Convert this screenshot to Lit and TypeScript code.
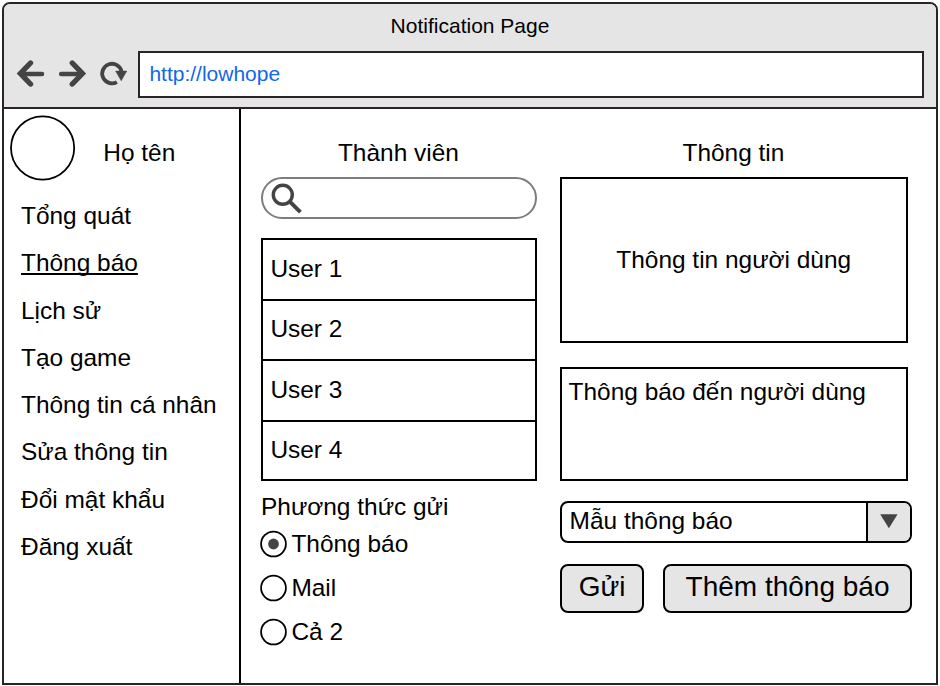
import { LitElement, html, css, svg } from "lit";
import { customElement, state } from "lit/decorators.js";
import { classMap } from "lit/directives/class-map.js";

@customElement("app-root")
export class AppRoot extends LitElement {
  static styles = css`
    :host {
      display: block;
      width: 940px;
      height: 686px;
      overflow: hidden;
      background: #fff;
      color: #000;
      font: 24.45px "Liberation Sans", Arial, sans-serif;
    }
    * {
      box-sizing: border-box;
    }
    svg {
      display: block;
      flex: none;
    }
    .window {
      display: flex;
      flex-direction: column;
      width: 936px;
      height: 683px;
      margin: 2px 0 0 2px;
      border: 2px solid #282427;
      border-radius: 8px 8px 0 0;
      overflow: hidden;
    }
    .chrome {
      height: 105px;
      flex: none;
      background: #e5e5e5;
      border-bottom: 2px solid #282427;
    }
    .caption {
      height: 47px;
      line-height: 44px;
      text-align: center;
      font-size: 21px;
    }
    .toolbar {
      display: flex;
      height: 47px;
      padding: 0 12px 0 12px;
    }
    .tools {
      width: 122px;
    }
    .address {
      flex: 1;
      border: 2px solid #282427;
      background: #fff;
      padding-left: 9.4px;
      line-height: 42px;
      font-size: 21px;
      color: #1267e8;
    }
    .body {
      flex: 1;
      display: flex;
      min-height: 0;
    }
    .sidebar {
      width: 237px;
      border-right: 2px solid #000;
      flex: none;
    }
    .profile {
      display: flex;
      height: 83px;
      padding: 6px 0 0 6px;
      gap: 27.3px;
    }
    .name {
      line-height: 75px;
    }
    nav {
      display: flex;
      flex-direction: column;
      align-items: flex-start;
      padding-left: 17px;
    }
    .link {
      height: 47.3px;
      line-height: 47.3px;
      white-space: nowrap;
    }
    .link.active {
      text-decoration: underline;
      text-decoration-thickness: 2px;
      text-underline-offset: 2px;
      text-decoration-skip-ink: none;
    }
    .main {
      display: flex;
      padding: 28px 0 0 20px;
      gap: 23px;
    }
    .members {
      width: 276px;
    }
    .info {
      width: 352px;
    }
    .heading {
      height: 40px;
      line-height: 32px;
      text-align: center;
      padding-right: 1.2px;
    }
    .info .heading {
      width: 348px;
    }
    .search {
      height: 42px;
      border: 2px solid #7d7d7d;
      border-radius: 21px;
      padding: 2px 0 0 8px;
    }
    .list {
      display: grid;
      grid-template-rows: 61px 60px 61px 57px;
      margin-top: 19px;
      border: 2px solid #000;
    }
    .row {
      padding-left: 7.4px;
      line-height: 56px;
      border-bottom: 2px solid #000;
    }
    .row:nth-child(odd) {
      line-height: 58px;
    }
    .row:last-child {
      border-bottom: 0;
    }
    .label {
      margin-top: 12px;
      height: 29px;
      line-height: 28px;
    }
    .radio {
      display: flex;
      align-items: center;
      height: 44px;
      line-height: 40px;
      gap: 4.4px;
    }
    .radio svg {
      overflow: visible;
    }
    .card {
      width: 348px;
      height: 166px;
      border: 2px solid #000;
      padding-right: 0.6px;
      line-height: 162px;
      text-align: center;
    }
    .message {
      width: 348px;
      height: 114px;
      margin-top: 24px;
      border: 2px solid #000;
      padding-left: 6.6px;
      line-height: 46px;
    }
    .select {
      display: flex;
      height: 42px;
      margin-top: 20px;
      border: 2px solid #000;
      border-radius: 8px;
      overflow: hidden;
    }
    .value {
      flex: 1;
      padding-left: 7.6px;
      line-height: 35px;
    }
    .arrow {
      width: 44px;
      background: #e5e5e5;
      border-left: 2px solid #000;
    }
    .actions {
      display: flex;
      justify-content: space-between;
      margin-top: 21px;
    }
    .button {
      height: 49px;
      border: 2px solid #000;
      border-radius: 8px;
      background: #e5e5e5;
      font-size: 28px;
      line-height: 41px;
      text-align: center;
    }
    .send {
      width: 84px;
    }
    .add {
      width: 249px;
    }
  `;

  @state() private page = "Thông báo";
  @state() private method = "Thông báo";

  private links = [
    "Tổng quát",
    "Thông báo",
    "Lịch sử",
    "Tạo game",
    "Thông tin cá nhân",
    "Sửa thông tin",
    "Đổi mật khẩu",
    "Đăng xuất",
  ];
  private users = ["User 1", "User 2", "User 3", "User 4"];
  private methods = ["Thông báo", "Mail", "Cả 2"];

  private tools() {
    return html`<svg class="tools" width="122" height="47" viewBox="16 51 122 47">
      <g fill="none" stroke="#444" stroke-linecap="round" stroke-linejoin="miter">
        <path d="M30.5 63 L20.4 73.5 L30.5 84" stroke-width="5.4" />
        <path d="M72.3 63 L82.4 73.5 L72.3 84" stroke-width="5.4" />
        <path d="M21 74 H42 M61.2 74 H82" stroke-width="4.6" />
        <path d="M116.9 82.1 A9.8 9.8 0 1 1 121.6 71.6" stroke-width="3.8" stroke-linecap="butt" />
      </g>
      <path d="M115.6 71.1 H126.8 L121.2 80.8 Z" fill="#444" stroke="#444" stroke-width="0.5" />
    </svg>`;
  }

  render() {
    return html`
      <div class="window">
        <div class="chrome">
          <div class="caption">Notification Page</div>
          <div class="toolbar">
            ${this.tools()}
            <div class="address">http://lowhope</div>
          </div>
        </div>
        <div class="body">
          <aside class="sidebar">
            <div class="profile">
              <svg width="66" height="66" viewBox="0 0 66 66">
                <circle cx="32.6" cy="33" r="31.6" fill="#fff" stroke="#000" stroke-width="1.8" />
              </svg>
              <div class="name">Họ tên</div>
            </div>
            <nav>
              ${this.links.map(
                (l) => html`<div
                  class=${classMap({ link: true, active: l === this.page })}
                  @click=${() => (this.page = l)}
                >${l}</div>`
              )}
            </nav>
          </aside>
          <main class="main">
            <section class="members">
              <div class="heading">Thành viên</div>
              <div class="search">
                <svg width="34" height="34" viewBox="271 181 34 34" fill="none" stroke="#444">
                  <circle cx="282.8" cy="194.8" r="9.5" stroke-width="3.4" />
                  <path d="M289.8 201.6 L300.4 212.2" stroke-width="4" />
                </svg>
              </div>
              <div class="list">${this.users.map((u) => html`<div class="row">${u}</div>`)}</div>
              <div class="label">Phương thức gửi</div>
              ${this.methods.map(
                (m) => html`<div class="radio" @click=${() => (this.method = m)}>
                  <svg width="26" height="26" viewBox="0 0 26 26">
                    <circle cx="12.5" cy="13" r="12.4" fill="#fff" stroke="#000" stroke-width="1.8" />
                    ${m === this.method ? svg`<circle cx="12.5" cy="13" r="5.4" fill="#444" />` : null}
                  </svg>
                  <span>${m}</span>
                </div>`
              )}
            </section>
            <section class="info">
              <div class="heading">Thông tin</div>
              <div class="card">Thông tin người dùng</div>
              <div class="message">Thông báo đến người dùng</div>
              <div class="select">
                <div class="value">Mẫu thông báo</div>
                <div class="arrow">
                  <svg width="42" height="38" viewBox="868 503 42 38">
                    <path d="M880.2 514.3 H897.6 L888.9 528.3 Z" fill="#444" />
                  </svg>
                </div>
              </div>
              <div class="actions">
                <div class="button send">Gửi</div>
                <div class="button add">Thêm thông báo</div>
              </div>
            </section>
          </main>
        </div>
      </div>
    `;
  }
}
